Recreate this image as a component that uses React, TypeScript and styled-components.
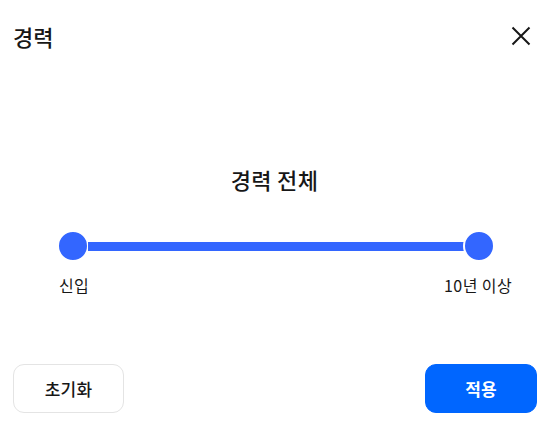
import React from 'react'
import styled, { createGlobalStyle } from 'styled-components'

const GlobalStyle = createGlobalStyle`
  html, body {
    margin: 0;
    padding: 0;
    background: #ffffff;
  }
  body {
    font-family: 'Noto Sans CJK KR', 'Noto Sans', sans-serif;
    color: #171717;
  }
`

const Modal = styled.div`
  width: 549px;
  height: 428px;
  display: flex;
  flex-direction: column;
  background: #fff;
`

const Header = styled.div`
  height: 72px;
  display: flex;
  align-items: center;
  justify-content: space-between;
  padding: 0 17px 0 13px;
  box-sizing: border-box;
`

const Title = styled.h2`
  margin: 0;
  font-size: 22px;
  line-height: 28px;
  font-weight: 500;
  letter-spacing: 0;
`

const CloseButton = styled.button`
  border: 0;
  background: none;
  padding: 0;
  width: 22px;
  height: 22px;
  display: flex;
  align-items: center;
  justify-content: center;
  cursor: pointer;
`

const Body = styled.div`
  flex: 1;
  display: flex;
  flex-direction: column;
  align-items: center;
  padding-top: 93px;
`

const RangeTitle = styled.div`
  font-size: 22px;
  line-height: 28px;
  font-weight: 500;
  letter-spacing: 0.3px;
`

const SliderWrap = styled.div`
  width: 438px;
  margin-top: 37px;
  margin-left: 2px;
  display: flex;
  align-items: center;
`

const Knob = styled.div`
  width: 32px;
  height: 32px;
  box-sizing: border-box;
  border-radius: 50%;
  border: 2px solid #fff;
  background: #3366ff;
  flex-shrink: 0;
`

const Track = styled.div`
  flex: 1;
  height: 9px;
  margin: 0 -1px;
  background: #3366ff;
`

const Labels = styled.div`
  width: 453px;
  margin-top: 13px;
  margin-left: 22px;
  display: flex;
  justify-content: space-between;
  font-size: 16px;
  line-height: 20px;
  letter-spacing: 0.4px;
`

const Footer = styled.div`
  height: 64px;
  display: flex;
  justify-content: space-between;
  align-items: flex-start;
  padding: 0 12px 0 13px;
  box-sizing: border-box;
`

const Button = styled.button<{ $primary?: boolean }>`
  width: ${p => (p.$primary ? 112 : 111)}px;
  height: 49px;
  border-radius: 11px;
  box-sizing: border-box;
  border: 1px solid ${p => (p.$primary ? '#0066ff' : '#e4e4e4')};
  background: ${p => (p.$primary ? '#0066ff' : '#ffffff')};
  color: ${p => (p.$primary ? '#ffffff' : '#171717')};
  font-family: 'Noto Sans CJK KR', 'Noto Sans', sans-serif;
  font-size: 17px;
  font-weight: ${p => (p.$primary ? 700 : 500)};
  letter-spacing: 0.2px;
  cursor: pointer;
`

export default function App() {
  return (
    <>
      <GlobalStyle />
      <Modal>
        <Header>
          <Title>경력</Title>
          <CloseButton aria-label="닫기">
            <svg width="20" height="20" viewBox="0 0 20 20">
              <path d="M1.5 1.5 L18.5 18.5 M18.5 1.5 L1.5 18.5" stroke="#171717" strokeWidth="2" fill="none" />
            </svg>
          </CloseButton>
        </Header>
        <Body>
          <RangeTitle>경력 전체</RangeTitle>
          <SliderWrap>
            <Knob />
            <Track />
            <Knob />
          </SliderWrap>
          <Labels>
            <span>신입</span>
            <span>10년 이상</span>
          </Labels>
        </Body>
        <Footer>
          <Button>초기화</Button>
          <Button $primary>적용</Button>
        </Footer>
      </Modal>
    </>
  )
}
